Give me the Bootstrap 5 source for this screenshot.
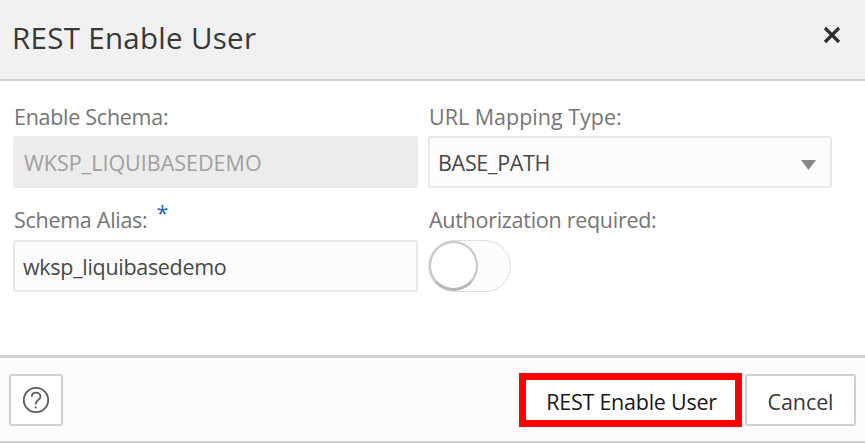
<!DOCTYPE html>
<html lang="en">
<head>
<meta charset="utf-8">
<meta name="viewport" content="width=device-width, initial-scale=1">
<title>REST Enable User</title>
<link href="https://cdn.jsdelivr.net/npm/bootstrap@5.3.0/dist/css/bootstrap.min.css" rel="stylesheet">
<style>
body{font-family:"Open Sans","Noto Sans",sans-serif;font-size:21.5px;line-height:30px;color:#404040;height:443px;overflow:hidden;background:#fff}
.dlg-head{height:81px;background:#f1f1f1;border-bottom:2px solid #d0d0d0;padding:0 24px 3px 12px}
.dlg-title{font-size:29.5px;font-weight:400;line-height:40px;color:#383838;letter-spacing:.3px}
.dlg-close{width:18px;height:18px;margin-top:-7px}
.dlg-body{height:274px;padding:21px 33px 0 13px}
.field-grid{display:grid;grid-template-columns:405px 404px;column-gap:10px}
.field-label{height:34px;padding:0 1px;color:#757575;white-space:nowrap;letter-spacing:-.28px}
.label-wide{letter-spacing:0}
.row-two{margin-top:17px}
.row-two .field-label{height:35px}
.field-box{height:52px;border:2px solid #e8e8e8;border-radius:3px;background:#fcfcfc;padding:2px 14px 0 8px;color:#484848;font-size:21.5px}
.field-box.is-off{background:#ececec;border-color:#ececec;color:#a0a0a0;padding-left:9px}
.value-tight{letter-spacing:-.3px}
.req{color:#1a6bb0;margin-left:9px;position:relative;top:-7px}
.switch-track{width:83px;height:52px;border:1px solid #dedede;border-radius:26px;background:#fcfcfc}
.switch-knob{width:49px;height:50px;border:2px solid #c5c7c7;border-bottom:3px solid #b5b7b7;border-radius:50%;background:#fff}
.dlg-foot{height:88px;background:#fcfcfc;border-top:3px solid #d0d0d0;border-bottom:2px solid #d0d0d0;padding:0 9px}
.act{height:52px;border:2px solid #cfcfcf;border-radius:3px;background:#fff;padding:4px 0 0;color:#383838;font-size:21.5px;line-height:30px}
.act-help{width:54px;padding:0}
.act-main{width:223px;height:54px;border:7px solid #f00;border-radius:0;color:#181818;letter-spacing:-.25px;padding-left:2px}
.act-cancel{width:111px;margin-left:3px;letter-spacing:-.1px}
</style>
</head>
<body>
<header class="dlg-head d-flex align-items-center justify-content-between">
<h1 class="dlg-title m-0">REST Enable User</h1>
<svg class="dlg-close" viewBox="0 0 18 18" fill="none" stroke="#303030" stroke-width="3.2"><path d="M2 2 16 16M16 2 2 16"/></svg>
</header>
<main class="dlg-body">
<div class="field-grid">
<div><div class="field-label">Enable Schema:</div><div class="field-box is-off d-flex align-items-center">WKSP_LIQUIBASEDEMO</div></div>
<div><div class="field-label label-wide">URL Mapping Type:</div><div class="field-box d-flex align-items-center justify-content-between"><span class="value-tight">BASE_PATH</span><svg class="mt-1" width="15" height="10" viewBox="0 0 15 10"><path d="M0 0H15L7.5 10Z" fill="#85898a"/></svg></div></div>
</div>
<div class="field-grid row-two">
<div><div class="field-label">Schema Alias:<span class="req">*</span></div><div class="field-box d-flex align-items-center"><span class="value-tight">wksp_liquibasedemo</span></div></div>
<div><div class="field-label">Authorization required:</div><div class="switch-track"><div class="switch-knob"></div></div></div>
</div>
</main>
<footer class="dlg-foot d-flex align-items-center">
<button class="act act-help d-flex align-items-center justify-content-center me-auto" aria-label="Help"><svg width="28" height="28" viewBox="0 0 28 28" fill="none" stroke="#5c5c5c" stroke-width="1.8"><circle cx="14" cy="14" r="12.2"/><path d="M9.8 10.7C9.8 8 11.6 6.7 14 6.7s4.5 1.5 4.5 4c0 3-4.8 3.7-4.8 6.8v.9"/><path d="M13.7 20.4v2"/></svg></button>
<button class="act act-main">REST Enable User</button>
<button class="act act-cancel">Cancel</button>
</footer>
<script src="https://cdn.jsdelivr.net/npm/bootstrap@5.3.0/dist/js/bootstrap.bundle.min.js"></script>
</body>
</html>
